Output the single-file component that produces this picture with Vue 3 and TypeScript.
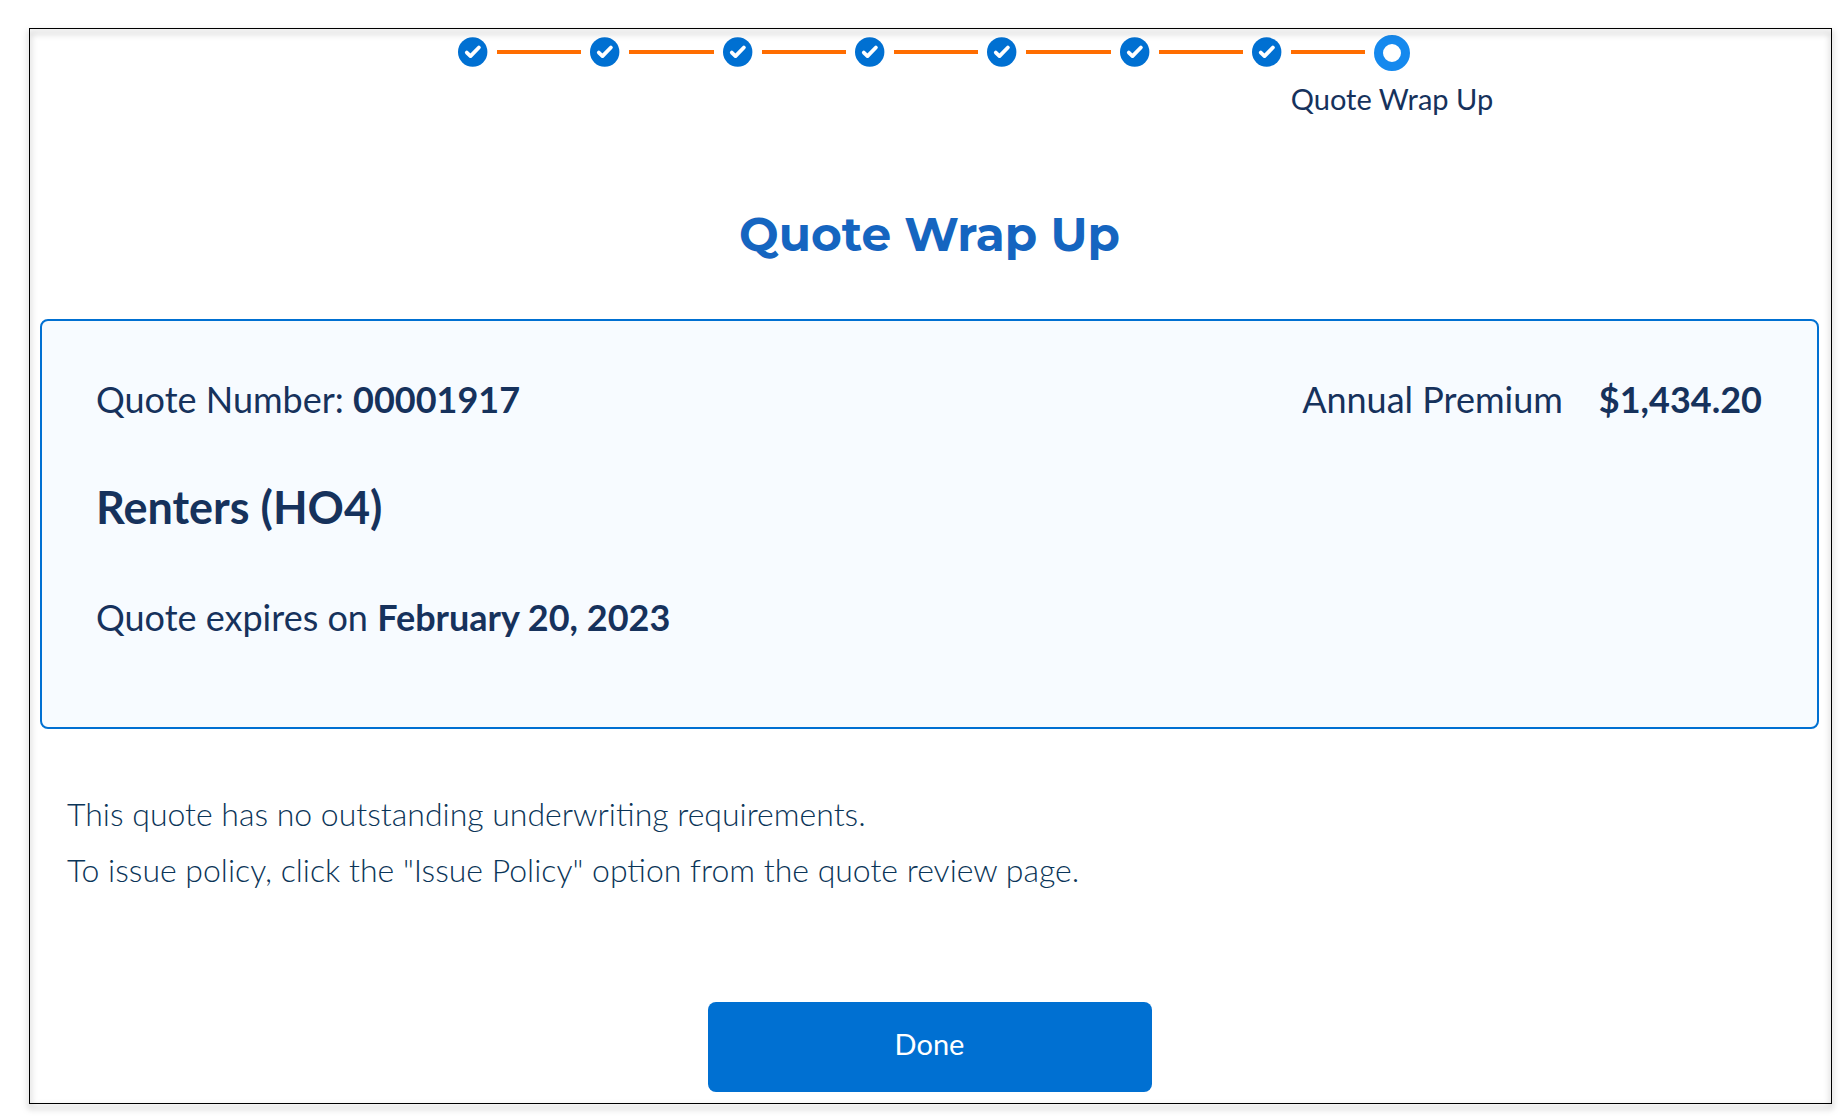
<script setup lang="ts">
interface Step {
  id: number
  name: string
  done: boolean
}

const title = 'Quote Wrap Up'

const steps: Step[] = Array.from({ length: 8 }, (_, i) => ({
  id: i + 1,
  name: i === 7 ? title : '',
  done: i < 7,
}))

const quote = {
  number: '00001917',
  premium: '$1,434.20',
  product: 'Renters (HO4)',
  expires: 'February 20, 2023',
}
</script>

<template>
  <main class="frame">
    <ol class="stepper">
      <li v-for="step in steps" :key="step.id" class="step" :class="{ current: !step.done }">
        <template v-if="step.done">
          <svg class="check" viewBox="0 0 30 30" aria-hidden="true">
            <circle cx="14.7" cy="15" r="14.7" fill="#0070d2" />
            <path
              d="M8.8 15.6l3.7 3.5 8.4-8.6"
              fill="none"
              stroke="#fff"
              stroke-width="3.8"
              stroke-linecap="round"
              stroke-linejoin="round"
            />
          </svg>
          <span class="connector"></span>
        </template>
        <template v-else>
          <span class="ring"></span>
          <span class="step-label">{{ step.name }}</span>
        </template>
      </li>
    </ol>

    <h1 class="title">{{ title }}</h1>

    <section class="card">
      <div class="card-row">
        <p>Quote Number: <strong>{{ quote.number }}</strong></p>
        <p class="premium">
          <span>Annual Premium</span>
          <strong>{{ quote.premium }}</strong>
        </p>
      </div>
      <h2 class="product">{{ quote.product }}</h2>
      <p>Quote expires on <strong>{{ quote.expires }}</strong></p>
    </section>

    <div class="notes">
      <p>This quote has no outstanding underwriting requirements.</p>
      <p>To issue policy, click the "Issue Policy" option from the quote review page.</p>
    </div>

    <button type="button" class="done">Done</button>
  </main>
</template>

<style>
body {
  background: #fff;
}
</style>

<style scoped>
.frame {
  position: relative;
  display: flex;
  flex-direction: column;
  margin: 28px 16px 14px 29px;
  padding: 7px 13px 12px 11px;
  font-family: Lato, 'Liberation Sans', sans-serif;
  color: #16325c;
}

/* Outline on its own layer, so that only the line casts the shadow */
.frame::after {
  content: '';
  position: absolute;
  inset: 0;
  border: 1px solid #000;
  filter: drop-shadow(0 4px 3px rgba(0, 0, 0, 0.6));
  pointer-events: none;
}

p,
h1,
h2,
ol {
  margin: 0;
  padding: 0;
}

.stepper {
  display: flex;
  align-self: center;
  width: 100%;
  max-width: 952px;
  padding-left: 9px;
  list-style: none;
}

.step {
  display: flex;
  flex: 1 1 0;
}

.step:nth-last-child(2) {
  flex: 0 0 122px;
}

.step.current {
  position: relative;
  flex: 0 0 36px;
}

.check {
  flex: none;
  width: 30px;
  height: 30px;
  margin-top: 2px;
}

.connector {
  flex: 1;
  height: 4px;
  margin: 15px 9px 0;
  background: #ff6d00;
}

.ring {
  box-sizing: border-box;
  width: 36px;
  height: 36px;
  border: 9px solid #1589ee;
  border-radius: 50%;
}

.step-label {
  position: absolute;
  top: 46px;
  left: 50%;
  transform: translateX(-50%);
  font-size: 29px;
  line-height: 36px;
  white-space: nowrap;
}

.title {
  margin-top: 132px;
  font-family: Montserrat, Inter, sans-serif;
  font-size: 47px;
  line-height: 64px;
  font-weight: 700;
  text-align: center;
  color: #1565c0;
}

.card {
  margin-top: 52px;
  padding: 54px 55px 86px 54px;
  border: 2px solid #0070d2;
  border-radius: 8px;
  background: #f7fbff;
  font-size: 36px;
  line-height: 48px;
}

.card-row {
  display: flex;
  justify-content: space-between;
}

.premium {
  display: flex;
  gap: 36px;
}

.product {
  margin: 54px 0 56px;
  font-size: 45px;
  line-height: 60px;
  font-weight: 700;
}

.notes {
  margin: 57px 0 0 27px;
  color: #0b3558;
  font-size: 32px;
  line-height: 56px;
  font-weight: 300;
}

.done {
  align-self: center;
  width: 444px;
  height: 90px;
  margin-top: 104px;
  padding: 0 0 6px;
  border: 0;
  border-radius: 8px;
  background: #0070d2;
  color: #fff;
  font-family: inherit;
  font-size: 29px;
  line-height: 36px;
}
</style>
